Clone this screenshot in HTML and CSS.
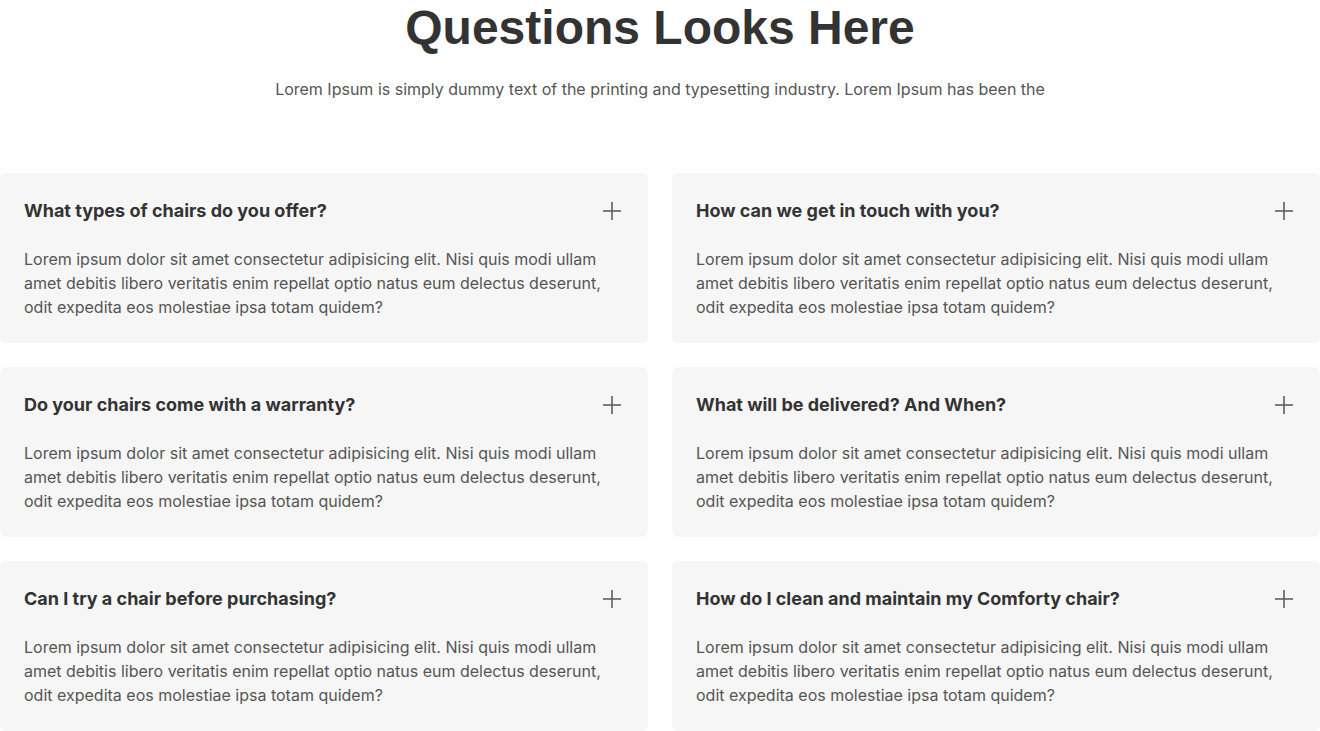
FILE: index.html
```html
<!DOCTYPE html>
<html lang="en">
<head>
<meta charset="utf-8">
<title>FAQ</title>
<link rel="stylesheet" href="styles.css">
</head>
<body>
<section class="faq">
  <h1 class="faq-title">Questions Looks Here</h1>
  <p class="faq-sub">Lorem Ipsum is simply dummy text of the printing and typesetting industry. Lorem Ipsum has been the</p>
  <div class="faq-grid">
    <div class="card">
      <div class="card-head"><h3>What types of chairs do you offer?</h3><svg class="plus" viewBox="0 0 24 24"><path d="M12 3v18M3 12h18"/></svg></div>
      <p>Lorem ipsum dolor sit amet consectetur adipisicing elit. Nisi quis modi ullam amet debitis libero veritatis enim repellat optio natus eum delectus deserunt, odit expedita eos molestiae ipsa totam quidem?</p>
    </div>
    <div class="card">
      <div class="card-head"><h3>How can we get in touch with you?</h3><svg class="plus" viewBox="0 0 24 24"><path d="M12 3v18M3 12h18"/></svg></div>
      <p>Lorem ipsum dolor sit amet consectetur adipisicing elit. Nisi quis modi ullam amet debitis libero veritatis enim repellat optio natus eum delectus deserunt, odit expedita eos molestiae ipsa totam quidem?</p>
    </div>
    <div class="card">
      <div class="card-head"><h3>Do your chairs come with a warranty?</h3><svg class="plus" viewBox="0 0 24 24"><path d="M12 3v18M3 12h18"/></svg></div>
      <p>Lorem ipsum dolor sit amet consectetur adipisicing elit. Nisi quis modi ullam amet debitis libero veritatis enim repellat optio natus eum delectus deserunt, odit expedita eos molestiae ipsa totam quidem?</p>
    </div>
    <div class="card">
      <div class="card-head"><h3>What will be delivered? And When?</h3><svg class="plus" viewBox="0 0 24 24"><path d="M12 3v18M3 12h18"/></svg></div>
      <p>Lorem ipsum dolor sit amet consectetur adipisicing elit. Nisi quis modi ullam amet debitis libero veritatis enim repellat optio natus eum delectus deserunt, odit expedita eos molestiae ipsa totam quidem?</p>
    </div>
    <div class="card">
      <div class="card-head"><h3>Can I try a chair before purchasing?</h3><svg class="plus" viewBox="0 0 24 24"><path d="M12 3v18M3 12h18"/></svg></div>
      <p>Lorem ipsum dolor sit amet consectetur adipisicing elit. Nisi quis modi ullam amet debitis libero veritatis enim repellat optio natus eum delectus deserunt, odit expedita eos molestiae ipsa totam quidem?</p>
    </div>
    <div class="card">
      <div class="card-head"><h3>How do I clean and maintain my Comforty chair?</h3><svg class="plus" viewBox="0 0 24 24"><path d="M12 3v18M3 12h18"/></svg></div>
      <p>Lorem ipsum dolor sit amet consectetur adipisicing elit. Nisi quis modi ullam amet debitis libero veritatis enim repellat optio natus eum delectus deserunt, odit expedita eos molestiae ipsa totam quidem?</p>
    </div>
  </div>
</section>
</body>
</html>
```

FILE: styles.css
```css
* { box-sizing: border-box; }
html, body { margin: 0; padding: 0; background: #fff; }
body { font-family: Inter, "Noto Sans", sans-serif; color: #333; }
.faq { padding: 0; }
.faq-title {
  margin: 0;
  font-family: "Liberation Sans", Arial, sans-serif;
  font-weight: 700;
  font-size: 48px;
  line-height: 56px;
  text-align: center;
  color: #333;
}
.faq-sub {
  margin: 21px 0 0;
  font-size: 16px;
  line-height: 24px;
  text-align: center;
  color: #555;
}
.faq-grid {
  margin-top: 72px;
  display: grid;
  grid-template-columns: 1fr 1fr;
  column-gap: 24px;
  row-gap: 24px;
}
.card {
  background: #f6f6f6;
  border-radius: 6px;
  padding: 24px;
}
.card-head {
  display: flex;
  align-items: center;
  justify-content: space-between;
}
.card-head h3 {
  margin: 0;
  font-size: 18px;
  line-height: 27px;
  font-weight: 700;
  color: #333;
}
.plus {
  width: 24px;
  height: 24px;
  flex: none;
  fill: none;
  stroke: #555;
  stroke-width: 1.5;
}
.card p {
  margin: 23px 0 0;
  font-size: 16px;
  line-height: 24px;
  color: #555;
}
```
